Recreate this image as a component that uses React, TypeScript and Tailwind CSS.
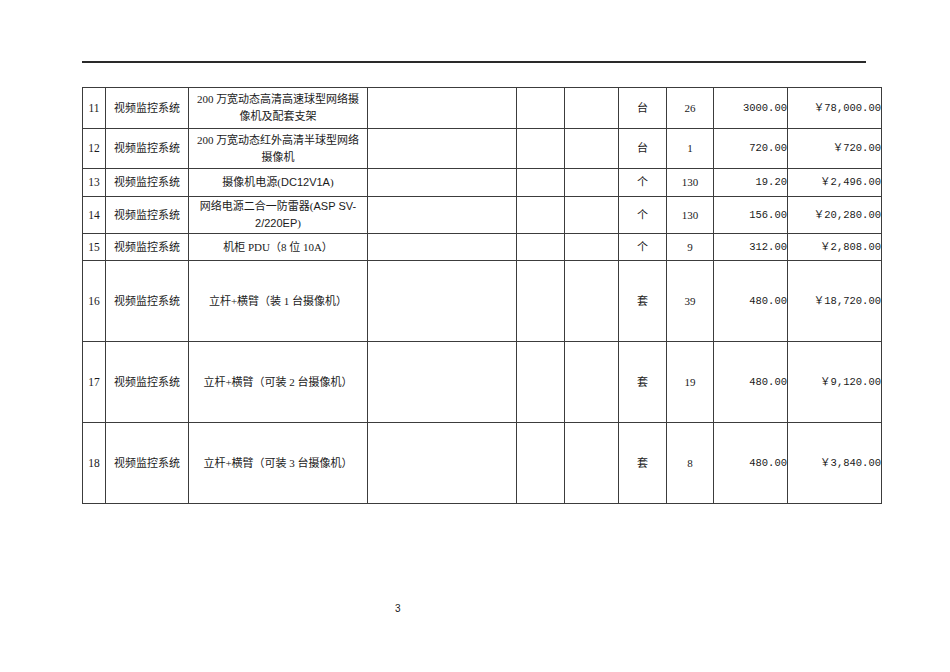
import React from 'react'

type Row = {
    no: string
    desc: React.ReactNode
    unit: string
    qty: string
    price: string
    total: string
    h: string
}

const rows: Row[] = [
    {
        no: '11',
        desc: (
            <>
                200 万宽动态高清高速球型网络摄
                <br />
                像机及配套支架
            </>
        ),
        unit: '台',
        qty: '26',
        price: '3000.00',
        total: '￥78,000.00',
        h: 'h-[41px]',
    },
    {
        no: '12',
        desc: (
            <>
                200 万宽动态红外高清半球型网络
                <br />
                摄像机
            </>
        ),
        unit: '台',
        qty: '1',
        price: '720.00',
        total: '￥720.00',
        h: 'h-[40px]',
    },
    {
        no: '13',
        desc: (
            <>
                摄像机电源(<span className="font-[Liberation_Sans]">DC12V1A</span>)
            </>
        ),
        unit: '个',
        qty: '130',
        price: '19.20',
        total: '￥2,496.00',
        h: 'h-[28px]',
    },
    {
        no: '14',
        desc: (
            <>
                网络电源二合一防雷器(<span className="font-[Liberation_Sans]">ASP SV-</span>
                <br />
                <span className="font-[Liberation_Sans]">2/220EP</span>)
            </>
        ),
        unit: '个',
        qty: '130',
        price: '156.00',
        total: '￥20,280.00',
        h: 'h-[37px]',
    },
    {
        no: '15',
        desc: '机柜 PDU（8 位 10A）',
        unit: '个',
        qty: '9',
        price: '312.00',
        total: '￥2,808.00',
        h: 'h-[27px]',
    },
    {
        no: '16',
        desc: '立杆+横臂（装 1 台摄像机）',
        unit: '套',
        qty: '39',
        price: '480.00',
        total: '￥18,720.00',
        h: 'h-[81px]',
    },
    {
        no: '17',
        desc: '立杆+横臂（可装 2 台摄像机）',
        unit: '套',
        qty: '19',
        price: '480.00',
        total: '￥9,120.00',
        h: 'h-[81px]',
    },
    {
        no: '18',
        desc: '立杆+横臂（可装 3 台摄像机）',
        unit: '套',
        qty: '8',
        price: '480.00',
        total: '￥3,840.00',
        h: 'h-[81px]',
    },
]

const cell = 'border border-[#3c3c3c] p-0 align-middle'
// money columns: monospaced digits, like the SimSun numbers in the source
const money = `${cell} text-right text-[10.5px] font-['Liberation_Mono','Noto_Sans_CJK_SC',monospace]`

export default function App() {
    return (
        <div
            className="w-[950px] h-[672px] bg-white text-[#1a1a1a] pt-[61px] pl-[82px]"
            style={{ fontFamily: '"Liberation Serif", "Noto Sans CJK SC", serif' }}
        >
            <div className="w-[784px] h-[2px] bg-[#2a2a2a]" />

            <table className="mt-[24px] border-collapse table-fixed w-[799px] text-[11px] leading-[17px]">
                <colgroup>
                    <col className="w-[23px]" />
                    <col className="w-[83px]" />
                    <col className="w-[179px]" />
                    <col className="w-[149px]" />
                    <col className="w-[48px]" />
                    <col className="w-[54px]" />
                    <col className="w-[48px]" />
                    <col className="w-[47px]" />
                    <col className="w-[74px]" />
                    <col className="w-[94px]" />
                </colgroup>
                <tbody>
                    {rows.map((r) => (
                        <tr key={r.no} className={r.h}>
                            <td className={`${cell} text-center text-[11.5px]`}>{r.no}</td>
                            <td className={`${cell} text-center`}>视频监控系统</td>
                            <td className={`${cell} text-center`}>{r.desc}</td>
                            <td className={cell} />
                            <td className={cell} />
                            <td className={cell} />
                            <td className={`${cell} text-center`}>{r.unit}</td>
                            <td className={`${cell} text-center`}>{r.qty}</td>
                            <td className={money}>{r.price}</td>
                            <td className={money}>{r.total}</td>
                        </tr>
                    ))}
                </tbody>
            </table>

            <div
                className="mt-[99px] pl-[313px] text-[10px] leading-[12px]"
                style={{ fontFamily: '"Liberation Sans", sans-serif' }}
            >
                3
            </div>
        </div>
    )
}
